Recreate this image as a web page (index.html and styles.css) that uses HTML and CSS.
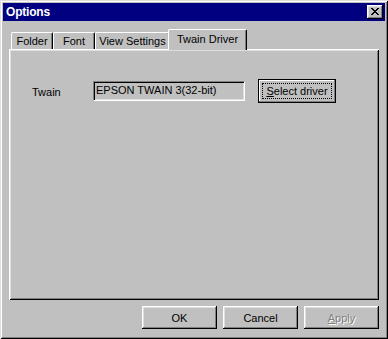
FILE: index.html
```html
<!DOCTYPE html>
<html lang="en">
<head>
    <meta charset="UTF-8">
    <meta name="viewport" content="width=device-width, initial-scale=1.0">
    <title>Options</title>
    <link rel="stylesheet" href="styles.css">
</head>
<body>
    <div class="window">
        <div class="titlebar">
            <span class="title">Options</span>
            <button class="close" aria-label="Close">
                <svg width="8" height="7" viewBox="0 0 8 7" shape-rendering="crispEdges">
                    <path fill="#000" d="M0 0h2v1H0zM6 0h2v1H6zM1 1h2v1H1zM5 1h2v1H5zM2 2h4v1H2zM3 3h2v1H3zM2 4h4v1H2zM1 5h2v1H1zM5 5h2v1H5zM0 6h2v1H0zM6 6h2v1H6z"/>
                </svg>
            </button>
        </div>
        <div class="content">
            <div class="tabs">
                <div class="tab">Folder</div>
                <div class="tab">Font</div>
                <div class="tab wide">View Settings</div>
                <div class="tab active">Twain Driver</div>
            </div>
            <div class="panel">
                <div class="field-row">
                    <span class="label">Twain</span>
                    <div class="edit">EPSON TWAIN 3(32-bit)</div>
                    <button class="btn default"><span class="focus"><u>S</u>elect driver</span></button>
                </div>
            </div>
            <div class="actions">
                <button class="btn">OK</button>
                <button class="btn">Cancel</button>
                <button class="btn disabled"><u>A</u>pply</button>
            </div>
        </div>
    </div>
</body>
</html>
```

FILE: styles.css
```css
* {
    box-sizing: border-box;
}

body {
    margin: 0;
    background-color: #c0c0c0;
    font-family: "Liberation Sans", Arial, sans-serif;
    font-size: 11px;
    color: #000;
}

.window {
    width: 388px;
    height: 339px;
    padding: 3px;
    display: flex;
    flex-direction: column;
    background-color: #c0c0c0;
    box-shadow: inset 1px 1px #dfdfdf, inset -1px -1px #000,
                inset 2px 2px #fff, inset -2px -2px #808080;
}

.titlebar {
    height: 18px;
    background-color: #000080;
    display: flex;
    align-items: center;
    justify-content: space-between;
    padding: 0 2px 0 3px;
}

.title {
    color: #fff;
    font-weight: bold;
    font-size: 12px;
    letter-spacing: -0.2px;
}

.close {
    width: 16px;
    height: 14px;
    padding: 0 0 1px 0;
    border: none;
    background-color: #c0c0c0;
    display: flex;
    align-items: center;
    justify-content: center;
    box-shadow: inset -1px -1px #000, inset 1px 1px #fff,
                inset -2px -2px #808080, inset 2px 2px #dfdfdf;
}

.content {
    flex: 1;
    display: flex;
    flex-direction: column;
    padding: 8px 6px 7px;
}

.tabs {
    height: 20px;
    display: flex;
    align-items: flex-end;
    padding-left: 2px;
}

.tab {
    width: 42px;
    height: 17px;
    padding: 1px 0 0;
    line-height: 14px;
    text-align: center;
    white-space: nowrap;
    background-color: #c0c0c0;
    border-top: 1px solid #fff;
    border-left: 1px solid #fff;
    border-right: 1px solid #000;
    border-radius: 2px 2px 0 0;
    box-shadow: inset -1px 0 #808080;
}

.tab.wide {
    width: 75px;
}

.tab.active {
    position: relative;
    z-index: 1;
    width: 79px;
    height: 21px;
    margin: 0 -2px -1px;
    padding-top: 2px;
}

.panel {
    flex: 1;
    padding: 30px 0 0 23px;
    box-shadow: inset 1px 1px #fff, inset -1px -1px #000,
                inset 2px 2px #dfdfdf, inset -2px -2px #808080;
}

.field-row {
    display: flex;
    align-items: center;
}

.label {
    width: 61px;
    padding-top: 2px;
}

.edit {
    width: 152px;
    height: 20px;
    padding: 0 2px;
    line-height: 17px;
    border: 1px solid;
    border-color: #808080 #fff #fff #808080;
    box-shadow: inset 1px 1px #000, inset -1px -1px #dfdfdf;
    white-space: nowrap;
    overflow: hidden;
}

.btn {
    width: 75px;
    height: 23px;
    padding: 0;
    border: none;
    background-color: #c0c0c0;
    font-family: inherit;
    font-size: 11px;
    color: #000;
    box-shadow: inset -1px -1px #000, inset 1px 1px #fff,
                inset -2px -2px #808080, inset 2px 2px #dfdfdf;
}

.btn.default {
    width: 78px;
    height: 24px;
    margin-left: 13px;
    padding: 3px;
    border: 1px solid #000;
    box-shadow: inset -1px -1px #808080, inset 1px 1px #fff;
}

.focus {
    display: block;
    height: 100%;
    line-height: 14px;
    border: 1px dotted #000;
}

.btn.disabled {
    color: #808080;
    text-shadow: 1px 1px #fff;
}

.actions {
    display: flex;
    justify-content: flex-end;
    gap: 6px;
    margin-top: 6px;
}
```
